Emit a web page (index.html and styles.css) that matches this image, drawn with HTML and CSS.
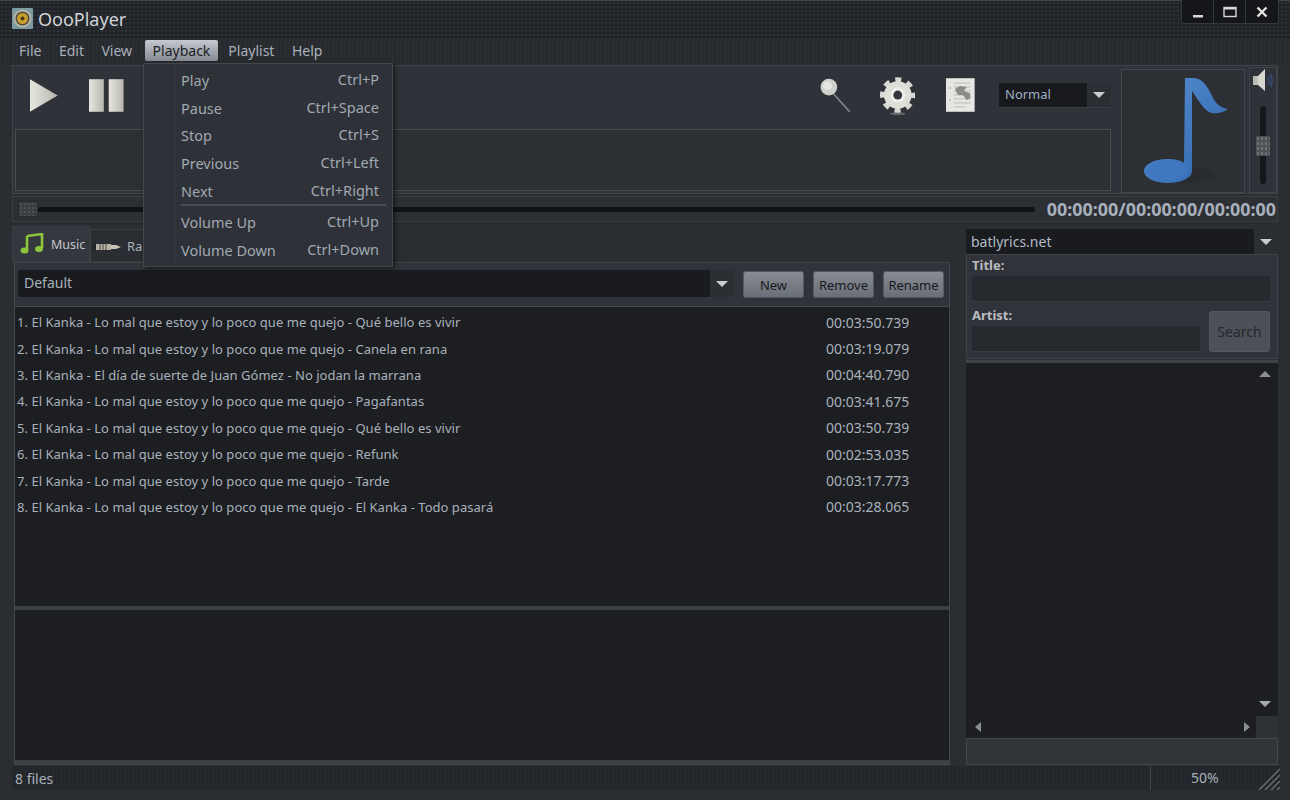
FILE: index.html
```html
<!DOCTYPE html>
<html lang="en">
<head>
  <meta charset="UTF-8">
  <meta name="viewport" content="width=device-width, initial-scale=1.0">
  <title>OooPlayer</title>
  <link rel="stylesheet" href="styles.css">
</head>
<body>
  <div class="window">

    <!-- Title bar -->
    <div class="titlebar">
      <svg class="app-logo" width="21" height="21" viewBox="0 0 21 21">
        <rect width="21" height="21" rx="1" fill="#7d9aa3"/>
        <circle cx="10.5" cy="10.5" r="9" fill="#b9b8a6"/>
        <circle cx="10.5" cy="10.5" r="7" fill="#4b4a3c"/>
        <circle cx="10.5" cy="10.500" r="5.500" fill="#c99f2e"/>
        <circle cx="10.5" cy="10.500" r="2" fill="#4a3a10"/>
      </svg>
      <span class="app-name">OooPlayer</span>
      <div class="win-buttons">
        <div class="win-btn"><svg width="12" height="12" viewBox="0 0 12 12"><rect x="1" y="9" width="10" height="2.5" fill="#d8d8d8"/></svg></div>
        <div class="win-btn"><svg width="14" height="12" viewBox="0 0 14 12"><rect x="1" y="1.5" width="12" height="9" fill="none" stroke="#d8d8d8" stroke-width="1.4"/><rect x="1" y="1" width="12" height="2.5" fill="#d8d8d8"/></svg></div>
        <div class="win-btn"><svg width="12" height="12" viewBox="0 0 12 12"><path d="M1.5 1.5l9 9M10.5 1.5l-9 9" stroke="#e4e4e4" stroke-width="2.4"/></svg></div>
      </div>
    </div>

    <!-- Menu bar -->
    <div class="menubar">
      <span class="menu-item">File</span>
      <span class="menu-item">Edit</span>
      <span class="menu-item">View</span>
      <span class="menu-item active">Playback</span>
      <span class="menu-item">Playlist</span>
      <span class="menu-item">Help</span>
    </div>

    <!-- Player controls -->
    <div class="player">
      <div class="player-main">
        <div class="toolbar">
          <svg class="tool-play" width="28" height="33" viewBox="0 0 28 33">
            <defs>
              <linearGradient id="metal" x1="0" y1="0" x2="1" y2="0">
                <stop offset="0" stop-color="#e6e5de"/>
                <stop offset="1" stop-color="#b8b7af"/>
              </linearGradient>
            </defs>
            <path d="M0 0L28 16.500 0 33z" fill="url(#metal)"/>
          </svg>
          <svg class="tool-pause" width="36" height="33" viewBox="0 0 36 33">
            <rect x="0" y="0" width="15" height="33" fill="url(#metal)"/>
            <rect x="20" y="0" width="15" height="33" fill="url(#metal)"/>
          </svg>
          <svg class="tool-search" width="32" height="36" viewBox="0 0 32 36">
            <path d="M13 15l17 19" stroke="#85888b" stroke-width="1.6"/>
            <circle cx="9" cy="9" r="8.500" fill="#cfcfcc"/>
            <circle cx="7.500" cy="7.500" r="4.500" fill="#e6e6e3"/>
          </svg>
          <svg class="tool-gear" width="36" height="40" viewBox="0 0 36 40">
            <ellipse cx="18" cy="37" rx="8" ry="1.500" fill="#64676b"/>
            <circle cx="18" cy="18" r="15.500" fill="none" stroke="#d9d8d4" stroke-width="5" stroke-dasharray="6.087 6.087" stroke-dashoffset="3"/>
            <circle cx="18" cy="18" r="14" fill="#dfded9"/>
            <circle cx="18" cy="18" r="7.500" fill="#efeeea"/>
            <circle cx="18" cy="18" r="4.500" fill="#33353a"/>
          </svg>
          <svg class="tool-doc" width="29" height="34" viewBox="0 0 29 34">
            <rect width="29" height="34" fill="#e6e6e3"/>
            <circle cx="4" cy="10" r=".8" fill="#9a9a98"/>
            <circle cx="4" cy="22" r=".8" fill="#9a9a98"/>
            <path d="M8 5h17M8 9h17M8 13h17M8 17h17M8 21h17M8 25h17M8 29h12" stroke="#bcbcb9" stroke-width="1"/>
            <path d="M9 11l5-3 7 1-3 4 6 2 1 5-4 2-4-5-5 0z" fill="#8b8b89"/>
          </svg>
          <div class="mode-combo">
            <span class="mode-value">Normal</span>
            <span class="combo-arrow"><i class="arrow-down"></i></span>
          </div>
        </div>
        <div class="info-box"></div>
      </div>
      <div class="cover">
        <svg width="90" height="108" viewBox="0 0 90 108">
          <defs>
            <linearGradient id="note" x1="0" y1="0" x2="1" y2="1">
              <stop offset="0" stop-color="#5a8fd0"/>
              <stop offset="1" stop-color="#2c64ad"/>
            </linearGradient>
          </defs>
          <ellipse cx="42" cy="98" rx="30" ry="8" fill="#292b2f"/>
          <path d="M42 1h8c8 0 13 6 17 14 4 8 8 16 18 17-4 3-10 5-16 4-8-2-13-12-20-22l0 80c0 7-11 12-24 12S1 101 1 94s11-12 24-12c7 0 12 1 16 4z" fill="url(#note)"/>
          <ellipse cx="25" cy="94" rx="20" ry="9" fill="#3f78c0"/>
        </svg>
      </div>
      <div class="volume">
        <svg width="22" height="24" viewBox="0 0 22 24">
          <rect x="1" y="8" width="5" height="9" fill="#bdbcb6"/>
          <path d="M6 8l7-7v22l-7-6z" fill="#d8d7d1"/>
          <path d="M16 8c1.500 3 1.500 6 0 9M18.500 6c2 4 2 9 0 13" stroke="#35558a" stroke-width="1.200" fill="none"/>
        </svg>
        <div class="volume-track"><span class="volume-handle"></span></div>
      </div>
    </div>

    <!-- Seek bar -->
    <div class="seekbar">
      <span class="seek-handle"></span>
      <div class="seek-groove"></div>
      <span class="seek-time">00:00:00/00:00:00/00:00:00</span>
    </div>

    <div class="content">

      <!-- Playlist side -->
      <div class="left-side">
        <div class="tabs">
          <div class="tab active">
            <svg width="24" height="22" viewBox="0 0 24 22">
              <path d="M7 3l15-2v14" fill="none" stroke="#8cc63f" stroke-width="2.600"/>
              <path d="M7 3v14" stroke="#8cc63f" stroke-width="2.600"/>
              <ellipse cx="4.500" cy="17.500" rx="4" ry="3" fill="#8cc63f"/>
              <ellipse cx="19" cy="16" rx="4" ry="3" fill="#8cc63f"/>
            </svg>
            <span>Music</span>
          </div>
          <div class="tab tab-radio">
            <svg width="28" height="10" viewBox="0 0 28 10">
              <rect x="0" y="1" width="3" height="8" fill="#222"/>
              <rect x="3" y="2" width="15" height="6" fill="#b8b4a8"/>
              <path d="M7 2v6M10 2v6M13 2v6" stroke="#444" stroke-width="1"/>
              <path d="M18 3h5l5 2-5 2h-5z" fill="#c8c4b8"/>
            </svg>
            <span>Radio</span>
          </div>
        </div>
        <div class="tab-pane">
          <div class="playlist-bar">
            <div class="playlist-combo">
              <span class="playlist-name">Default</span>
              <span class="combo-arrow"><i class="arrow-down"></i></span>
            </div>
            <button class="btn">New</button>
            <button class="btn">Remove</button>
            <button class="btn">Rename</button>
          </div>
          <div class="track-list">
            <div class="track"><span>1. El Kanka - Lo mal que estoy y lo poco que me quejo - Qué bello es vivir</span><span class="track-time">00:03:50.739</span></div>
            <div class="track"><span>2. El Kanka - Lo mal que estoy y lo poco que me quejo - Canela en rana</span><span class="track-time">00:03:19.079</span></div>
            <div class="track"><span>3. El Kanka - El día de suerte de Juan Gómez - No jodan la marrana</span><span class="track-time">00:04:40.790</span></div>
            <div class="track"><span>4. El Kanka - Lo mal que estoy y lo poco que me quejo - Pagafantas</span><span class="track-time">00:03:41.675</span></div>
            <div class="track"><span>5. El Kanka - Lo mal que estoy y lo poco que me quejo - Qué bello es vivir</span><span class="track-time">00:03:50.739</span></div>
            <div class="track"><span>6. El Kanka - Lo mal que estoy y lo poco que me quejo - Refunk</span><span class="track-time">00:02:53.035</span></div>
            <div class="track"><span>7. El Kanka - Lo mal que estoy y lo poco que me quejo - Tarde</span><span class="track-time">00:03:17.773</span></div>
            <div class="track"><span>8. El Kanka - Lo mal que estoy y lo poco que me quejo - El Kanka - Todo pasará</span><span class="track-time">00:03:28.065</span></div>
          </div>
          <div class="splitter"></div>
          <div class="detail-list"></div>
        </div>
      </div>

      <!-- Lyrics side -->
      <div class="right-side">
        <div class="lyrics-combo">
          <span class="lyrics-site">batlyrics.net</span>
          <span class="combo-arrow"><i class="arrow-down"></i></span>
        </div>
        <div class="lyrics-form">
          <label class="form-label">Title:</label>
          <div class="form-input"></div>
          <div class="form-row">
            <div class="form-col">
              <label class="form-label">Artist:</label>
              <div class="form-input"></div>
            </div>
            <button class="btn-search">Search</button>
          </div>
        </div>
        <div class="lyrics-view">
          <div class="scroll-v">
            <i class="arrow-up"></i>
            <i class="arrow-down"></i>
          </div>
          <div class="scroll-h">
            <i class="arrow-left"></i>
            <i class="arrow-right"></i>
            <span class="scroll-corner"></span>
          </div>
        </div>
        <div class="lyrics-foot"></div>
      </div>
    </div>

    <!-- Status bar -->
    <div class="statusbar">
      <span class="status-files">8 files</span>
      <span class="status-zoom">50%</span>
      <svg class="grip" width="22" height="22" viewBox="0 0 22 22">
        <path d="M22 1L1 22M22 7L7 22M22 13L13 22M22 19L19 22" stroke="#6a6d71" stroke-width="1.500"/>
      </svg>
    </div>

    <!-- Open Playback menu -->
    <div class="dropdown">
      <div class="drop-row"><span>Play</span><span class="shortcut">Ctrl+P</span></div>
      <div class="drop-row"><span>Pause</span><span class="shortcut">Ctrl+Space</span></div>
      <div class="drop-row"><span>Stop</span><span class="shortcut">Ctrl+S</span></div>
      <div class="drop-row"><span>Previous</span><span class="shortcut">Ctrl+Left</span></div>
      <div class="drop-row"><span>Next</span><span class="shortcut">Ctrl+Right</span></div>
      <div class="drop-sep"></div>
      <div class="drop-row"><span>Volume Up</span><span class="shortcut">Ctrl+Up</span></div>
      <div class="drop-row"><span>Volume Down</span><span class="shortcut">Ctrl+Down</span></div>
    </div>

  </div>
</body>
</html>
```

FILE: styles.css
```css
* {
  box-sizing: border-box;
}
body {
  margin: 0;
  background-color: #2a2d32;
  font-family: "Noto Sans", "Open Sans", sans-serif;
  font-size: 14px;
  color: #a9b1bb;
  overflow: hidden;
}
i {
  display: block;
}
.window {
  position: relative;
  width: 1290px;
  height: 800px;
  display: flex;
  flex-direction: column;
  border-top: 1px solid #44474c;
  background-color: #2a2d32;
}

/* Title bar */
.titlebar {
  height: 37px;
  flex: none;
  display: flex;
  align-items: flex-start;
  padding: 7px 0 0 12px;
  background-color: #212428;
  background-image: radial-gradient(#2e3136 1px, transparent 1px);
  background-size: 4px 4px;
  border-bottom: 1px solid #1b1d20;
}
.app-logo {
  flex: none;
}
.app-name {
  margin-left: 5px;
  font-size: 18px;
  line-height: 22px;
  color: #d0d3d6;
}
.win-buttons {
  display: flex;
  margin-left: auto;
  margin-right: 11px;
  margin-top: -8px;
  height: 24px;
  background-color: #14161a;
  border: 1px solid #34373b;
  border-top: none;
  border-radius: 0 0 3px 3px;
}
.win-btn {
  width: 32px;
  display: flex;
  align-items: center;
  justify-content: center;
  border-right: 1px solid #34373b;
}
.win-btn:last-child {
  border-right: none;
}

/* Menu bar */
.menubar {
  height: 27px;
  flex: none;
  display: flex;
  align-items: center;
  padding: 0 0 2px 11px;
  background-image: repeating-linear-gradient(90deg, #2a2d32 0 2px, #272a2e 2px 4px);
}
.menu-item {
  padding: 0 8px;
  margin-right: 1.500px;
  line-height: 21px;
  border-radius: 2px;
}
.menu-item.active {
  margin: 0 2px 0 3px;
  color: #1d2024;
  background-image: linear-gradient(#c5cad0, #868b93);
}

/* Player controls */
.player {
  height: 129px;
  flex: none;
  margin: 0 12px;
  padding: 3px 1px 2px 2px;
  display: flex;
  border: 1px solid #3f4247;
  background-color: #2f3238;
}
.player-main {
  width: 1096px;
  flex: none;
  display: flex;
  flex-direction: column;
}
.toolbar {
  height: 60px;
  flex: none;
  display: flex;
  align-items: center;
  padding-bottom: 8px;
}
.tool-play {
  margin-left: 15px;
}
.tool-pause {
  margin-left: 31px;
}
.tool-search {
  margin-left: 696px;
  margin-top: 2px;
}
.tool-gear {
  margin-left: 28px;
  margin-top: 4px;
}
.tool-doc {
  margin-left: 31px;
}
.mode-combo {
  display: flex;
  margin-left: 24px;
  width: 112px;
  height: 25px;
  flex: none;
  background-color: #17191c;
  border-bottom: 1px solid #3c3f44;
}
.mode-value {
  flex: 1;
  padding-left: 6px;
  font-size: 13px;
  line-height: 23px;
  color: #9fb0c4;
}
.combo-arrow {
  width: 24px;
  flex: none;
  display: flex;
  align-items: center;
  justify-content: center;
  background-color: #2b2e33;
}
.arrow-down {
  width: 0;
  height: 0;
  border-left: 6px solid transparent;
  border-right: 6px solid transparent;
  border-top: 6px solid #c9ccd0;
}
.arrow-up {
  width: 0;
  height: 0;
  border-left: 6px solid transparent;
  border-right: 6px solid transparent;
  border-bottom: 6px solid #8b8e92;
}
.arrow-left {
  width: 0;
  height: 0;
  border-top: 5px solid transparent;
  border-bottom: 5px solid transparent;
  border-right: 6px solid #8b8e92;
}
.arrow-right {
  width: 0;
  height: 0;
  border-top: 5px solid transparent;
  border-bottom: 5px solid transparent;
  border-left: 6px solid #8b8e92;
}
.info-box {
  height: 62px;
  border: 1px solid #484b50;
  background-color: #2c2f34;
}
.cover {
  width: 124px;
  height: 124px;
  margin-left: 10px;
  flex: none;
  padding: 7px 0 0 21px;
  border: 1px solid #42454a;
  background-color: #2c2f34;
}
.volume {
  width: 28px;
  height: 126px;
  margin: -2px 0 0 4px;
  flex: none;
  display: flex;
  flex-direction: column;
  align-items: center;
  padding-top: 0;
  border: 1px solid #3f4247;
}
.volume-track {
  position: relative;
  width: 6px;
  height: 78px;
  margin-top: 14px;
  border-radius: 3px;
  background-color: #15171a;
}
.volume-handle {
  position: absolute;
  top: 30px;
  left: -4px;
  width: 14px;
  height: 20px;
  border-radius: 2px;
  background-color: #4e5257;
  background-image: radial-gradient(#6d7176 1px, transparent 1px);
  background-size: 4px 5px;
}

/* Seek bar */
.seekbar {
  height: 26px;
  flex: none;
  margin: 2px 12px 0;
  padding: 0 1px 0 5px;
  display: flex;
  align-items: center;
  border: 1px solid #3a3d42;
  background-color: #2c2f34;
}
.seek-handle {
  width: 20px;
  height: 16px;
  flex: none;
  background-color: #3a3d42;
  background-image: radial-gradient(#4e5156 1px, transparent 1px);
  background-size: 4px 4px;
  border: 1px solid #25272b;
  border-radius: 2px;
}
.seek-groove {
  flex: 1;
  height: 5px;
  border-radius: 2px;
  background-color: #101215;
}
.seek-time {
  margin-left: 12px;
  font-size: 17.900px;
  font-weight: 700;
  color: #a7b0bb;
}

/* Main content */
.content {
  height: 538px;
  flex: none;
  margin: 5px 12px 0;
  display: flex;
}
.left-side {
  width: 940px;
  flex: none;
  display: flex;
  flex-direction: column;
}
.tabs {
  height: 35px;
  flex: none;
  display: flex;
  align-items: flex-end;
}
.tab {
  height: 33px;
  display: flex;
  align-items: center;
  gap: 7px;
  padding-left: 2px;
  border: 1px solid #3a3d42;
  background-color: #2a2d32;
  font-size: 13px;
}
.tab-radio {
  width: 90px;
  gap: 6px;
}
.tab-radio svg {
  margin-top: 2px;
}
.tab.active {
  width: 78px;
  height: 36px;
  padding-left: 7px;
  font-size: 12.500px;
  color: #c2c7cd;
  background-color: #34373d;
}
.tab-pane {
  flex: 1;
  margin-left: 2px;
  margin-right: 2px;
  display: flex;
  flex-direction: column;
  border: 1px solid #44474c;
  border-top-color: #3f4247;
  background-color: #303339;
}
.playlist-bar {
  height: 44px;
  flex: none;
  display: flex;
  align-items: flex-start;
  padding: 7px 5px 0 3px;
  gap: 9px;
  border-bottom: 1px solid #45484d;
}
.playlist-combo {
  flex: 1;
  height: 27px;
  display: flex;
  background-color: #191b1f;
  border-radius: 2px;
}
.playlist-name {
  flex: 1;
  padding-left: 6px;
  line-height: 25px;
}
.btn {
  width: 61px;
  height: 27px;
  margin-top: 1px;
  padding: 1px 0 0;
  border: 1px solid #55585e;
  border-radius: 3px;
  background-image: linear-gradient(#878c94, #6a6e76);
  font-family: inherit;
  font-size: 13px;
  color: #17191c;
}
.track-list {
  height: 299px;
  flex: none;
  padding-top: 2px;
  background-color: #1c1e22;
}
.track {
  height: 26.4px;
  display: flex;
  align-items: center;
  padding-left: 2px;
  font-size: 13px;
  letter-spacing: 0.03px;
  white-space: nowrap;
}
.track-time {
  position: absolute;
  left: 826px;
  font-size: 14px;
  letter-spacing: 0;
}
.splitter {
  height: 4px;
  flex: none;
  background-color: #3c3f44;
}
.detail-list {
  flex: 1;
  background-color: #1c1e22;
  border-bottom: 4px solid #3c3f44;
}

/* Lyrics side */
.right-side {
  width: 312px;
  flex: none;
  margin-left: 14px;
  display: flex;
  flex-direction: column;
}
.lyrics-combo {
  height: 25px;
  flex: none;
  margin-top: 2px;
  display: flex;
  background-color: #191b1f;
}
.lyrics-site {
  flex: 1;
  padding-left: 5px;
  line-height: 25px;
  color: #b1bac5;
}
.lyrics-form {
  height: 105px;
  flex: none;
  padding: 1px 7px 0 5px;
  border: 1px solid #3f4247;
  background-color: #303339;
}
.form-label {
  display: block;
  height: 20px;
  font-size: 13px;
  font-weight: 700;
  line-height: 18px;
  color: #b9bcc0;
}
.form-input {
  height: 26px;
  background-color: #26292d;
  border-bottom: 1px solid #383b40;
}
.form-row {
  display: flex;
  align-items: flex-end;
  margin-top: 4px;
}
.form-col {
  flex: 1;
}
.btn-search {
  width: 61px;
  height: 41px;
  margin-left: 9px;
  padding: 0;
  border: 1px solid #54575c;
  border-radius: 3px;
  background-color: #4c5057;
  font-family: inherit;
  font-size: 14px;
  color: #25272b;
}
.lyrics-view {
  position: relative;
  height: 378px;
  flex: none;
  margin-top: 1px;
  border-top: 3px solid #3f4247;
  background-color: #1c1e22;
}
.scroll-v {
  position: absolute;
  top: 8px;
  right: 7px;
  bottom: 31px;
  display: flex;
  flex-direction: column;
  justify-content: space-between;
}
.scroll-v .arrow-down {
  border-top-color: #a5a8ac;
}
.scroll-h {
  position: absolute;
  left: 9px;
  right: 0;
  bottom: 0;
  height: 22px;
  display: flex;
  align-items: center;
  justify-content: space-between;
  padding-right: 28px;
}
.scroll-corner {
  position: absolute;
  right: 0;
  top: 0;
  width: 22px;
  height: 22px;
  background-color: #2e3136;
}
.lyrics-foot {
  flex: 1;
  border: 1px solid #44474c;
  background-color: #313439;
}

/* Status bar */
.statusbar {
  position: relative;
  height: 24px;
  flex: none;
  margin: 1px 10px 0 12px;
  display: flex;
  align-items: center;
  background-image: repeating-linear-gradient(90deg, #25282c 0 2px, #222529 2px 4px);
}
.status-files {
  padding-left: 3px;
}
.status-zoom {
  position: absolute;
  left: 1138px;
  top: 0;
  width: 102px;
  height: 24px;
  padding-left: 40px;
  line-height: 24px;
  border-left: 1px solid #44474c;
}
.grip {
  position: absolute;
  right: 0;
  bottom: 0;
}

/* Open menu */
.dropdown {
  position: absolute;
  left: 143px;
  top: 62px;
  width: 250px;
  height: 204px;
  padding: 2px 13px 0 37px;
  border: 1px solid #44474c;
  background-color: #2e3137;
  background-image: linear-gradient(90deg, transparent 31px, #26282c 31px, #44474c 32px, transparent 32px);
  box-shadow: 2px 2px 4px rgba(0, 0, 0, 0.5);
  font-size: 14.500px;
  color: #a0a8b2;
}
.drop-row {
  height: 27.7px;
  display: flex;
  justify-content: space-between;
  align-items: center;
}
.shortcut {
  margin-top: -2px;
}
.drop-sep {
  height: 2px;
  margin: 0 -7px 2px 0;
  background-color: #4a4d52;
}
```
